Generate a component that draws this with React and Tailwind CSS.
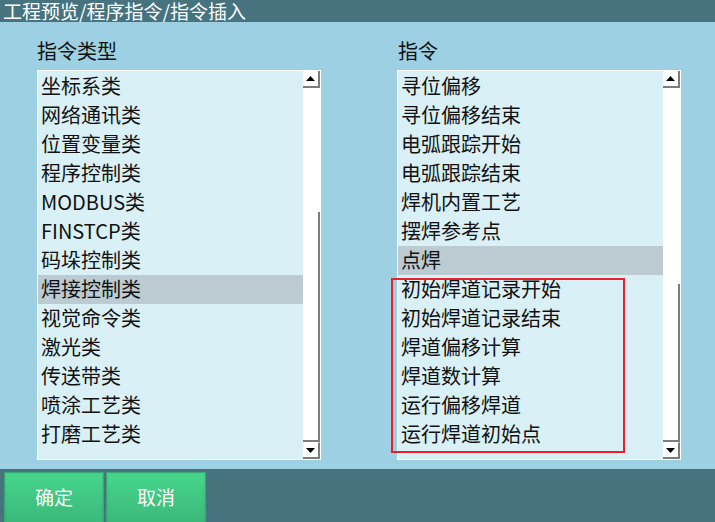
import React from "react";

const types = [
  "坐标系类",
  "网络通讯类",
  "位置变量类",
  "程序控制类",
  "MODBUS类",
  "FINSTCP类",
  "码垛控制类",
  "焊接控制类",
  "视觉命令类",
  "激光类",
  "传送带类",
  "喷涂工艺类",
  "打磨工艺类",
];

const commands = [
  "寻位偏移",
  "寻位偏移结束",
  "电弧跟踪开始",
  "电弧跟踪结束",
  "焊机内置工艺",
  "摆焊参考点",
  "点焊",
  "初始焊道记录开始",
  "初始焊道记录结束",
  "焊道偏移计算",
  "焊道数计算",
  "运行偏移焊道",
  "运行焊道初始点",
];

function Arrow({ down }) {
  return (
    <svg width="9" height="5" viewBox="0 0 9 5">
      {down ? <path d="M0 0h9L4.5 5z" fill="#000" /> : <path d="M0 5h9L4.5 0z" fill="#000" />}
    </svg>
  );
}

function ListBox({ items, selected, thumbTop, thumbHeight }) {
  return (
    <div className="flex w-[284px] h-[390px] border border-white bg-[#d9f0f7]">
      <div className="flex-1 pt-px">
        {items.map((it, i) => (
          <div
            key={it}
            className={`h-[29px] pl-[3px] pb-[2px] flex items-center text-[20px] leading-none text-[#111] whitespace-nowrap ${
              i === selected ? "bg-[#bbcbd1]" : ""
            }`}
          >
            {it}
          </div>
        ))}
      </div>
      <div className="w-[17px] bg-white flex flex-col">
        <div className="h-[17px] flex items-center justify-center border-r-2 border-b-2 border-[#7d7d7d] bg-white">
          <Arrow />
        </div>
        <div className="flex-1 flex flex-col">
          <div
            className="bg-white border-r-2 border-b-2 border-[#7d7d7d]"
            style={{ marginTop: thumbTop, height: thumbHeight }}
          />
        </div>
        <div className="h-[17px] flex items-center justify-center border-r-2 border-b-2 border-t border-t-white border-[#7d7d7d] bg-white">
          <Arrow down />
        </div>
      </div>
    </div>
  );
}

export default function App() {
  return (
    <div
      className="relative w-[715px] h-[522px] flex flex-col overflow-hidden select-none"
      style={{ fontFamily: '"Noto Sans CJK SC", "Noto Sans", sans-serif' }}
    >
      {/* Title */}
      <div className="h-[22px] bg-[#47737f] text-white text-[19px] leading-[21px] pl-[3px] whitespace-nowrap">
        工程预览/程序指令/指令插入
      </div>

      {/* Main */}
      <div className="flex-1 bg-[#9dd0e2] flex pl-[37px] pt-[17px] gap-[76px]">
        <div className="flex flex-col">
          <div className="h-[31px] text-[20px] leading-[24px] text-[#111]">指令类型</div>
          <ListBox items={types} selected={7} thumbTop={124} thumbHeight={230} />
        </div>
        <div className="flex flex-col">
          <div className="h-[31px] text-[20px] leading-[24px] text-[#111] pl-px">指令</div>
          <ListBox items={commands} selected={6} thumbTop={196} thumbHeight={158} />
        </div>
      </div>

      {/* Bottom bar */}
      <div className="h-[53px] bg-[#47737f] flex items-start pt-[3px] pl-[4px] gap-[2px]">
        {["确定", "取消"].map((t) => (
          <button
            key={t}
            className="w-[100px] h-[54px] bg-gradient-to-b from-[#46d68b] to-[#3bb77a] border border-[#3aa872] text-white text-[19px] leading-none pb-[6px] shadow-[inset_0_0_2px_rgba(0,0,0,0.15)]"
          >
            {t}
          </button>
        ))}
      </div>

      {/* Highlight box */}
      <div className="absolute left-[391px] top-[278px] w-[234px] h-[175px] border-2 border-[#e8202a] pointer-events-none" />
    </div>
  );
}
